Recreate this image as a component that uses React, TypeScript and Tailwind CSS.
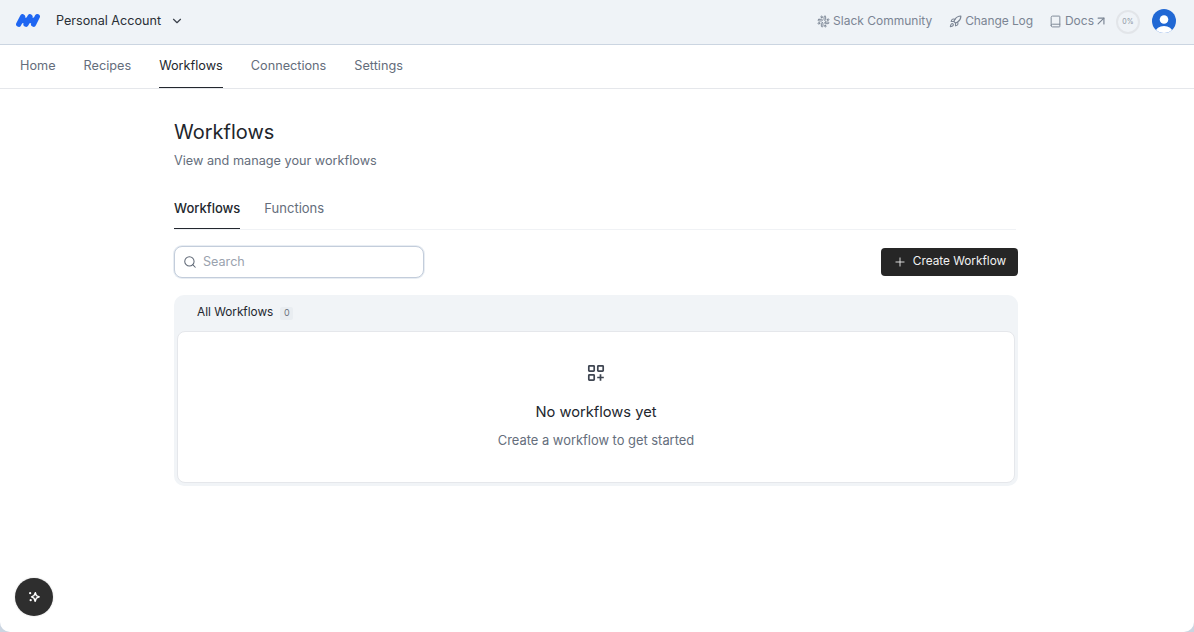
import { ChevronDown, Search, Plus, Rocket, ArrowUpRight, Slack, Book } from "lucide-react";

function Logo() {
  return (
    <svg width="24" height="13" viewBox="0 0 24 13" fill="none" className="shrink-0">
      <g stroke="#1f66f2" strokeWidth="5.2" strokeLinecap="round">
        <path d="M2.7 10.2 L6.6 2.7" />
        <path d="M10 10.2 L14 2.7" />
        <path d="M17.6 10.2 L21.3 2.7" />
      </g>
      <rect x="4" y="3.6" width="15" height="5.6" fill="#1f66f2" />
    </svg>
  );
}

function Avatar() {
  return (
    <svg width="24" height="24" viewBox="0 0 24 24" className="shrink-0">
      <defs>
        <clipPath id="av"><circle cx="12" cy="12" r="12" /></clipPath>
      </defs>
      <g clipPath="url(#av)">
        <rect width="24" height="24" fill="#2168d4" />
        <circle cx="12" cy="10.5" r="4.3" fill="#fff" />
        <ellipse cx="12" cy="23" rx="8.5" ry="6" fill="#fff" />
      </g>
    </svg>
  );
}

function Sparkle() {
  return (
    <svg width="14" height="14" viewBox="0 0 16 16" fill="none" stroke="#fff" strokeWidth="1.6" strokeLinejoin="round">
      <path d="M9.6 3 L10.7 6.5 L14 7.8 L10.7 9.2 L9.4 13 L7.9 9.2 L5.2 7.8 L7.9 6.5 Z" />
      <circle cx="3.6" cy="3.6" r="1.3" fill="#fff" stroke="none" />
      <circle cx="4.2" cy="11.6" r="1.3" fill="#fff" stroke="none" />
    </svg>
  );
}

function GridPlus() {
  return (
    <svg width="18" height="18" viewBox="0 0 18 18" fill="none" stroke="#3f4652" strokeWidth="1.7">
      <rect x="1.8" y="1.8" width="5.4" height="5.4" rx="0.6" />
      <rect x="10.8" y="1.8" width="5.4" height="5.4" rx="0.6" />
      <rect x="1.8" y="10.8" width="5.4" height="5.4" rx="0.6" />
      <path d="M13.5 10.2 V16.8 M10.2 13.5 H16.8" />
    </svg>
  );
}

export default function App() {
  return (
    <div className="h-[632px] w-[1194px] bg-[#cbd5e1]">
      <div className="h-full w-full overflow-hidden rounded-b-[10px] bg-white font-['Inter',sans-serif] text-[#1f2328]">
        <header className="flex h-[45px] items-center justify-between border-b border-[#cbd5e1] bg-[#eff3f7] pb-[2px] pl-4 pr-[18px]">
          <div className="flex items-center">
            <Logo />
            <span className="ml-4 text-[12.6px] text-[#2a2f36]">Personal Account</span>
            <ChevronDown className="ml-[9px] h-[14px] w-[14px] text-[#3a404a]" strokeWidth={2} />
          </div>
          <div className="flex items-center text-[12px] text-[#7b8594]">
            <div className="flex items-center gap-[3px]">
              <Slack className="h-[13px] w-[13px]" strokeWidth={1.75} />
              <span>Slack Community</span>
            </div>
            <div className="ml-[17px] flex items-center gap-[3px]">
              <Rocket className="h-[13px] w-[13px]" strokeWidth={2} />
              <span className="tracking-[-0.1px]">Change Log</span>
            </div>
            <div className="ml-[16px] flex items-center">
              <Book className="mr-[3px] h-[13px] w-[13px]" strokeWidth={1.75} />
              <span>Docs</span>
              <ArrowUpRight className="h-[14px] w-[14px]" strokeWidth={2} />
            </div>
            <div className="ml-[8px] mt-[2px] flex h-6 w-6 items-center justify-center rounded-full border-2 border-[#e2e5e9] text-[7px] text-[#8b94a1]">
              0%
            </div>
            <div className="ml-[12px]"><Avatar /></div>
          </div>
        </header>

        <nav className="flex h-[44px] gap-7 border-b border-[#e5e7eb] pl-5 text-[12.7px] text-[#646d7b]">
          <a className="flex items-center border-b border-transparent">Home</a>
          <a className="flex items-center border-b border-transparent">Recipes</a>
          <a className="flex items-center border-b border-[#23272e] text-[#23272e]">Workflows</a>
          <a className="flex items-center border-b border-transparent">Connections</a>
          <a className="flex items-center border-b border-transparent">Settings</a>
        </nav>

        <main className="ml-[174px] w-[844px] pt-[30px]">
          <h1 className="text-[20px] leading-[26px] text-[#22262c]">Workflows</h1>
          <p className="mt-[7px] text-[12.7px] leading-[18px] text-[#656e7c]">View and manage your workflows</p>

          <div className="mt-[23px] flex h-[37px] w-[842px] gap-6 border-b border-[#f0f2f5] text-[13px] text-[#646d7b]">
            <span className="flex items-center border-b border-[#23272e] pb-[4px] font-medium text-[#23272e]">Workflows</span>
            <span className="flex items-center pb-[5px]">Functions</span>
          </div>

          <div className="mt-4 flex items-center justify-between">
            <label className="flex h-8 w-[250px] items-center gap-[6px] rounded-[8px] border border-[#c3cddb] bg-white pl-[8px] shadow-[0_0_0_1px_#e8edf3]">
              <Search className="h-[14px] w-[14px] text-[#5d6674]" strokeWidth={1.75} />
              <span className="text-[12.6px] text-[#9aa2ae]">Search</span>
            </label>
            <button className="flex h-7 w-[137px] items-center justify-center gap-[6px] rounded-[4px] bg-[#262626] text-[11.8px] text-[#f2f2f2]">
              <Plus className="h-[14px] w-[14px]" strokeWidth={1.5} />
              Create Workflow
            </button>
          </div>

          <section className="mt-[17px] rounded-[10px] bg-[#f1f4f7] px-[3px] pb-[3px]">
            <div className="flex h-[36px] items-center pl-[20px] text-[11.8px] text-[#23272e]">
              All Workflows
              <span className="ml-[7px] flex h-[13px] w-[13px] items-center justify-center rounded-[2px] bg-[#e9edf1] text-[9px] text-[#6b7380]">0</span>
            </div>
            <div className="flex h-[152px] flex-col items-center rounded-[8px] border border-[#e5e7eb] bg-white">
              <div className="mt-[32px]"><GridPlus /></div>
              <p className="mt-[20px] text-[14.7px] leading-[20px] text-[#23272e]">No workflows yet</p>
              <p className="mt-[10px] text-[12.9px] leading-[18px] text-[#656e7c]">Create a workflow to get started</p>
            </div>
          </section>
        </main>

        <button className="fixed bottom-[16px] left-[15px] flex h-[38px] w-[38px] items-center justify-center rounded-full bg-[#2e2e2e] shadow-[0_0_2px_rgba(0,0,0,0.2)]">
          <Sparkle />
        </button>
      </div>
    </div>
  );
}
